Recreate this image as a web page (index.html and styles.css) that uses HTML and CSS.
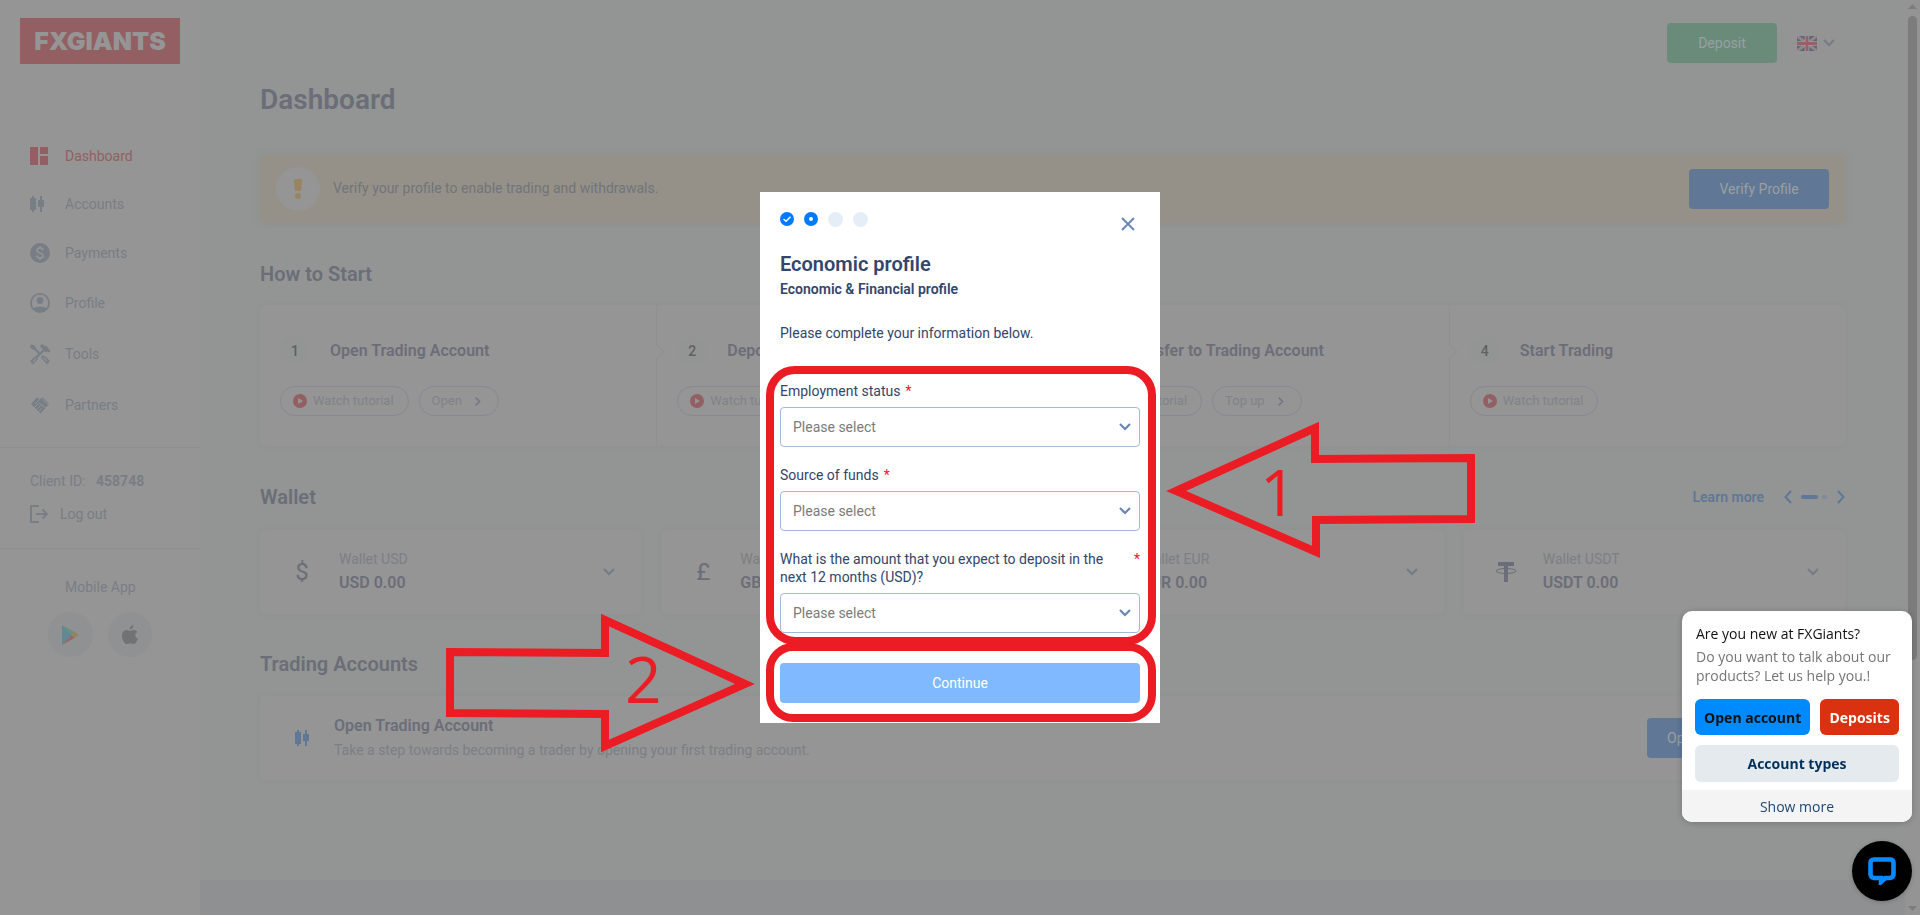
FILE: index.html
```html
<!DOCTYPE html>
<html lang="en">
<head>
<meta charset="utf-8">
<title>FXGiants - Dashboard</title>
<link rel="stylesheet" href="styles.css">
</head>
<body>
<svg class="defs" width="0" height="0" aria-hidden="true">
  <symbol id="chev-down" viewBox="0 0 14 10"><path d="M2 2l5 5 5-5" fill="none" stroke="currentColor" stroke-width="2.2"/></symbol>
  <symbol id="chev-right" viewBox="0 0 10 14"><path d="M2 2l5 5-5 5" fill="none" stroke="currentColor" stroke-width="2"/></symbol>
  <symbol id="candles" viewBox="0 0 18 18"><path d="M2 1h2v2h1.2v12H4v2H2v-2H0V3h2zM10 1h2v4h2v7h-2v5h-2v-5H8V5h2z" fill="currentColor"/><rect y="3" width="6" height="12" fill="currentColor"/></symbol>
  <symbol id="play" viewBox="0 0 14 14"><circle cx="7" cy="7" r="7" fill="#935f63"/><path d="M5 4l5 3-5 3z" fill="#959595"/></symbol>
</svg>

<div class="app">
  <aside class="sidebar">
    <div class="logo">FXGIANTS</div>
    <nav class="nav">
      <a class="nav-item active" href="#"><svg width="20" height="18" viewBox="0 0 20 18"><path d="M0 0h8v18H0zM10 0h8v7h-8zM10 9h8v9h-8z" fill="currentColor"/></svg>Dashboard</a>
      <a class="nav-item" href="#"><svg width="20" height="18" viewBox="0 0 20 18"><use href="#candles" width="18" height="18"/></svg>Accounts</a>
      <a class="nav-item" href="#"><svg width="20" height="20" viewBox="0 0 20 20"><circle cx="10" cy="10" r="10" fill="currentColor"/><path d="M13 7.300C12.700 5.800 11.600 5 10 5S7 5.900 7 7.400 8 9.400 10 10s3.200 1.200 3.200 2.700S11.800 15 10 15s-3-1-3.200-2.500M10 3v2.500M10 14.500V17" fill="none" stroke="#949494" stroke-width="1.700"/></svg>Payments</a>
      <a class="nav-item" href="#"><svg width="20" height="20" viewBox="0 0 20 20"><circle cx="10" cy="10" r="9.100" fill="none" stroke="currentColor" stroke-width="1.800"/><circle cx="10" cy="7.500" r="3.400" fill="currentColor"/><path d="M3.500 15.500C5.500 12.800 14.500 12.800 16.500 15.500C14 19.500 6 19.500 3.500 15.500z" fill="currentColor"/></svg>Profile</a>
      <a class="nav-item" href="#"><svg width="20" height="22" viewBox="0 0 20 22"><path d="M3 4l7 7M15 6L2 18.500M12 13l6 5.500" stroke="currentColor" stroke-width="2.200" fill="none"/><path d="M1 1.500l3 .5 2 3-2 2-3-1.500L0 3zM10 3l3-3v2l2 1 2 .5 3 4v2l-3-1-1 1-4-4zM0 18l5-4.500L8 16l-5 5.500zM11 14.500l3-2 6 5.500-3 3.500z" fill="currentColor"/><path d="M3 18.500l3-2.800M13.500 14.500l3.500 3.700" stroke="#949494" stroke-width="1.100"/></svg>Tools</a>
      <a class="nav-item" href="#"><svg width="20" height="20" viewBox="0 0 20 20"><path d="M1 9l6-6.500 3 1.500 3-1.500L19 9l-8.500 9.500z" fill="currentColor"/><path d="M10 4L5 9M12.500 4l6 6M4.500 12.500L9 8M6.500 14.500l4-4M8.500 16.500l4-4M9 8l7 5" stroke="#949494" stroke-width=".9" fill="none"/></svg>Partners</a>
    </nav>
    <div class="client">
      <div>Client ID: <strong>458748</strong></div>
      <a class="logout" href="#"><svg width="18" height="18" viewBox="0 0 18 18"><path d="M9 1H1v16h8M6 9h11M12.500 4.500L17 9l-4.500 4.500" fill="none" stroke="currentColor" stroke-width="1.900"/></svg>Log out</a>
    </div>
    <div class="mobile">
      <div>Mobile App</div>
      <div class="stores">
        <a class="store" href="#" aria-label="Google Play"><svg width="18" height="20" viewBox="0 0 18 20"><path d="M1 0v20l9.500-10z" fill="#618894"/><path d="M1 0l12.500 7-3 3z" fill="#62947a"/><path d="M13.500 7L18 10l-4.500 3-3-3z" fill="#998159"/><path d="M1 20l12.500-7-3-3z" fill="#976768"/></svg></a>
        <a class="store" href="#" aria-label="App Store"><svg width="16" height="20" viewBox="0 0 16 20"><path d="M11.500 0c.2 2-1.600 4.300-3.700 4.300C7.600 2.200 9.400.3 11.500 0zM8 6c1 0 2-1 3.800-1 1.400 0 2.700.7 3.500 1.900-3 1.700-2.500 5.600.6 6.900C15 16.300 13.500 19 11.800 19c-1.300 0-1.900-.8-3.500-.8S6 19 4.800 19C2.500 19 0 14.500 0 11c0-3.700 2.200-5.900 4.500-5.900C6 5.100 7.200 6 8 6z" fill="#717273"/></svg></a>
      </div>
    </div>
  </aside>

  <div class="page">
    <main class="main">
      <div class="topbar">
        <button class="btn green">Deposit</button>
        <button class="lang" aria-label="Language">
          <svg width="20" height="15" viewBox="0 0 20 15"><path d="M0 0h20v15H0z" fill="#5f6879"/><path d="M0 0l20 15M20 0L0 15" stroke="#9c9a9b" stroke-width="2.400"/><path d="M0 0l20 15M20 0L0 15" stroke="#976267" stroke-width=".8"/><path d="M10 0v15M0 7.500h20" stroke="#9c9a9b" stroke-width="4.600"/><path d="M10 0v15M0 7.500h20" stroke="#976267" stroke-width="2.800"/></svg>
          <svg width="14" height="10"><use href="#chev-down"/></svg>
        </button>
      </div>
      <h1>Dashboard</h1>
      <section class="alert">
        <span class="alert-icon"><svg width="8" height="20" viewBox="0 0 8 20"><path d="M0 1.500Q0 0 1.500 0h5Q8 0 8 1.500L7 11q-.2 1-1.200 1H2.200Q1.200 12 1 11z" fill="#998460"/><circle cx="4" cy="17" r="3" fill="#998460"/></svg></span>
        <p>Verify your profile to enable trading and withdrawals.</p>
        <button class="btn blue verify">Verify Profile</button>
      </section>

      <h2>How to Start</h2>
      <section class="steps">
        <div class="step"><div class="step-head"><span class="num">1</span><h3>Open Trading Account</h3></div>
          <div class="pills"><button class="pill"><svg width="14" height="14"><use href="#play"/></svg>Watch tutorial</button><button class="pill">Open<svg class="go" width="8" height="11"><use href="#chev-right"/></svg></button></div></div>
        <div class="step"><div class="step-head"><span class="num">2</span><h3>Deposit</h3></div>
          <div class="pills"><button class="pill"><svg width="14" height="14"><use href="#play"/></svg>Watch tutorial</button><button class="pill">Deposit<svg class="go" width="8" height="11"><use href="#chev-right"/></svg></button></div></div>
        <div class="step"><div class="step-head"><span class="num">3</span><h3>Transfer to Trading Account</h3></div>
          <div class="pills"><button class="pill"><svg width="14" height="14"><use href="#play"/></svg>Watch tutorial</button><button class="pill">Top up<svg class="go" width="8" height="11"><use href="#chev-right"/></svg></button></div></div>
        <div class="step"><div class="step-head"><span class="num">4</span><h3>Start Trading</h3></div>
          <div class="pills"><button class="pill"><svg width="14" height="14"><use href="#play"/></svg>Watch tutorial</button></div></div>
      </section>

      <div class="section-head">
        <h2>Wallet</h2>
        <a class="learn" href="#">Learn more</a>
        <div class="pager">
          <button aria-label="Previous"><svg width="8" height="14" viewBox="0 0 8 14"><path d="M7 1L1.500 7 7 13" fill="none" stroke="currentColor" stroke-width="2"/></svg></button>
          <span class="bar"></span><span class="dot"></span>
          <button aria-label="Next"><svg width="8" height="14" viewBox="0 0 8 14"><path d="M1 1l5.500 6L1 13" fill="none" stroke="currentColor" stroke-width="2"/></svg></button>
        </div>
      </div>
      <section class="wallets">
        <article class="wallet"><span class="coin">$</span><div><p>Wallet USD</p><strong>USD 0.00</strong></div><svg class="more" width="14" height="10"><use href="#chev-down"/></svg></article>
        <article class="wallet"><span class="coin">£</span><div><p>Wallet GBP</p><strong>GBP 0.00</strong></div><svg class="more" width="14" height="10"><use href="#chev-down"/></svg></article>
        <article class="wallet"><span class="coin">€</span><div><p>Wallet EUR</p><strong>EUR 0.00</strong></div><svg class="more" width="14" height="10"><use href="#chev-down"/></svg></article>
        <article class="wallet"><span class="coin"><svg width="22" height="20" viewBox="0 0 22 20"><path d="M3 0h16v4h-6v16H9V4H3z" fill="currentColor"/><ellipse cx="11" cy="9" rx="10" ry="2.500" fill="none" stroke="currentColor" stroke-width="1"/></svg></span><div><p>Wallet USDT</p><strong>USDT 0.00</strong></div><svg class="more" width="14" height="10"><use href="#chev-down"/></svg></article>
      </section>

      <h2>Trading Accounts</h2>
      <section class="trade">
        <span class="coin tint"><svg width="14" height="18" viewBox="0 0 14 18"><use href="#candles" width="18" height="18"/></svg></span>
        <div><h3>Open Trading Account</h3><p>Take a step towards becoming a trader by opening your first trading account.</p></div>
        <button class="btn blue">Open Trading Account</button>
      </section>
    </main>
    <footer class="footer"></footer>
  </div>

  <div class="scrollbar" aria-hidden="true">
    <svg width="9" height="5" viewBox="0 0 9 5"><path d="M0 5l4.500-5L9 5z" fill="#7d7d7d"/></svg>
    <span class="thumb"></span>
    <svg width="9" height="5" viewBox="0 0 9 5"><path d="M0 0l4.500 5L9 0z" fill="#7d7d7d"/></svg>
  </div>
</div>

<div class="overlay">
  <form class="modal" role="dialog" aria-labelledby="modal-title">
    <div class="modal-top">
      <div class="progress">
        <svg width="14" height="14" viewBox="0 0 14 14"><circle cx="7" cy="7" r="7" fill="#007aff"/><path d="M3.500 7l2.500 2.300 4.500-4.500" fill="none" stroke="#fff" stroke-width="1.400"/></svg>
        <svg width="14" height="14" viewBox="0 0 14 14"><circle cx="7" cy="7" r="7" fill="#007aff"/><circle cx="7" cy="7" r="2" fill="#fff"/></svg>
        <span class="todo"></span><span class="todo"></span>
      </div>
      <button class="close" type="button" aria-label="Close"><svg width="14" height="14" viewBox="0 0 14 14"><path d="M1 1l12 12M13 1L1 13" stroke="#6a87b0" stroke-width="2"/></svg></button>
    </div>
    <h2 id="modal-title">Economic profile</h2>
    <h3>Economic &amp; Financial profile</h3>
    <p class="intro">Please complete your information below.</p>
    <div class="field">
      <label for="employment"><span>Employment status</span><em>*</em></label>
      <div class="select"><select id="employment"><option>Please select</option></select><svg width="14" height="10"><use href="#chev-down"/></svg></div>
    </div>
    <div class="field">
      <label for="funds"><span>Source of funds</span><em>*</em></label>
      <div class="select"><select id="funds"><option>Please select</option></select><svg width="14" height="10"><use href="#chev-down"/></svg></div>
    </div>
    <div class="field">
      <label for="amount"><span>What is the amount that you expect to deposit in the next 12 months (USD)?</span><em>*</em></label>
      <div class="select"><select id="amount"><option>Please select</option></select><svg width="14" height="10"><use href="#chev-down"/></svg></div>
    </div>
    <button class="continue" type="submit">Continue</button>

    <svg class="marks" width="400" height="531" viewBox="0 0 400 531">
      <g fill="none" stroke="#ec1c24" stroke-width="8" stroke-miterlimit="10">
        <rect x="10" y="178" width="382" height="271" rx="25"/>
        <rect x="10" y="455" width="382" height="71" rx="23"/>
        <path d="M416 299L555 236V267L711 266V327L556 328V360z"/>
        <path d="M-15 492L-155 428V461L-310 460V521L-155 522V554z"/>
      </g>
      <text x="500" y="324">1</text>
      <text x="-135" y="511">2</text>
    </svg>
  </form>
</div>

<aside class="chat">
  <div class="chat-body">
    <p class="chat-title">Are you new at FXGiants?</p>
    <p class="chat-text">Do you want to talk about our products? Let us help you.!</p>
    <div class="chat-actions">
      <button class="c-blue">Open account</button>
      <button class="c-red">Deposits</button>
      <button class="c-grey">Account types</button>
    </div>
  </div>
  <button class="chat-more">Show more</button>
</aside>
<button class="launcher" aria-label="Chat"><svg width="28" height="28" viewBox="0 0 28 28"><path d="M6 2.500h16q3.500 0 3.500 3.500v11q0 3.500-3.500 4h-4.500l-4.500 4v-4H6q-3.500-.5-3.500-4V6Q2.500 2.500 6 2.500z" fill="none" stroke="#0a8aff" stroke-width="4.600"/></svg></button>
</body>
</html>
```
FILE: styles.css
```css
* { box-sizing: border-box; margin: 0; padding: 0; }
body { font-family: Roboto, sans-serif; font-size: 14px; line-height: 18px; color: #7b7f86; background: #929593; overflow: hidden; }
button { font: inherit; border: 0; cursor: pointer; }
a { color: inherit; text-decoration: none; }
svg { display: block; flex: none; }
.defs { position: absolute; }

.app { display: flex; min-height: 100vh; }
.sidebar { width: 200px; flex: none; background: #959595; color: #787e86; }
.logo { margin: 18px 20px 0; height: 46px; background: #935f63; color: #959595; font: 900 25px/46px Inter, sans-serif; text-align: center; }
.nav { display: flex; flex-direction: column; gap: 30px; padding: 83px 30px 32px; }
.nav-item { display: flex; align-items: center; gap: 15px; height: 20px; }
.nav-item:nth-child(-n+2) { height: 18px; }
.nav-item:nth-child(5) { height: 22px; }
.active { color: #935f63; }
.client { border: solid #8d9092; border-width: 1px 0; padding: 24px 30px 25px; display: flex; flex-direction: column; gap: 15px; }
.client strong { margin-left: 7px; font-weight: 700; }
.logout { display: flex; align-items: center; gap: 12px; }
.mobile { padding: 29px 48px; }
.mobile > div:first-child { padding-left: 17px; }
.stores { display: flex; gap: 15px; padding-top: 16px; }
.store { width: 45px; height: 45px; border-radius: 50%; background: #909192; display: grid; place-items: center; }

.page { flex: 1; min-width: 0; display: flex; flex-direction: column; }
.main { flex: 1; padding: 23px 60px 0; }
.footer { height: 35px; background: #8f9092; }
h1, h2, h3 { font-weight: 600; color: #6b6e78; }
h1 { font-size: 28px; line-height: 36px; margin: 19px 0 37px; }
.main h2 { font-size: 20px; line-height: 24px; }
h3 { font-size: 16px; line-height: 20px; }
.topbar { display: flex; justify-content: flex-end; gap: 10px; }
.btn { height: 40px; padding: 0 20px; border-radius: 4px; color: #9c9fa1; }
.green { background: #6a8b7a; width: 110px; }
.blue { background: #607896; }
.verify { width: 140px; }
.lang { width: 58px; height: 40px; border-radius: 4px; background: #949494; color: #757c87; display: flex; align-items: center; justify-content: center; gap: 5px; }
.alert { display: flex; align-items: center; height: 68px; padding: 0 16px; border-radius: 4px; background: #959188; box-shadow: 0 0 6px #8f8f8f; margin-bottom: 39px; color: #71747a; }
.alert p { flex: 1; padding: 0 0 2px 13px; }
.alert-icon { width: 44px; height: 44px; border-radius: 50%; background: #959595; display: grid; place-items: center; }
.steps, .wallet, .trade { background: #959595; border-radius: 4px; box-shadow: 0 0 4px #919090; }
.steps { display: grid; grid-template-columns: repeat(4, 1fr); margin: 19px 0 39px; }
.step { position: relative; padding: 31px 20px 30px; }
.step + .step { border-left: 1px solid #8f9092; }
.step + .step::before { content: ""; position: absolute; left: -6px; top: 41px; width: 10px; height: 10px; border: solid #8f9092; border-width: 1px 1px 0 0; background: #959595; transform: rotate(45deg); }
.step-head { display: flex; align-items: center; gap: 20px; }
.num { width: 30px; height: 30px; border-radius: 50%; background: #929593; color: #5f6163; font-weight: 500; display: grid; place-items: center; }
.pills { display: flex; gap: 10px; padding-top: 20px; }
.pill { display: flex; align-items: center; gap: 6px; height: 30px; padding: 0 14px 0 12px; border: 1px solid #888992; border-radius: 15px; background: none; color: #7f8388; font-size: 13px; }
.go { margin: 0 2px 0 6px; color: #717885; }
.section-head { display: flex; align-items: center; color: #5f7798; }
.section-head h2 { flex: 1; }
.learn { font-weight: 600; }
.pager { display: flex; align-items: center; gap: 4px; padding-left: 20px; }
.pager button { background: none; color: inherit; padding: 5px 0; }
.bar { width: 17px; height: 4px; border-radius: 2px; background: #5f7798; margin-left: 5px; }
.dot { width: 5px; height: 4px; border-radius: 2px; background: #7f8b9b; margin-right: 6px; }
.wallets { display: grid; grid-template-columns: repeat(4, 1fr); gap: 20px; margin: 21px 0 38px; }
.wallet { display: flex; align-items: center; gap: 15px; height: 84px; padding: 0 25px 0 20px; }
.wallet strong { display: block; font-size: 16px; line-height: 24px; font-weight: 600; color: #6b6e78; }
.wallet p { line-height: 20px; padding-bottom: 2px; }
.coin { width: 44px; height: 44px; border-radius: 50%; background: #949594; color: #6b6e78; display: grid; place-items: center; font-size: 24px; }
.more { margin-left: auto; color: #757c87; }
.trade { display: flex; align-items: center; height: 84px; padding: 0 20px; gap: 10px; margin-top: 20px; }
.trade div { flex: 1; }
.trade p { line-height: 20px; padding-top: 4px; }
.tint { color: #607896; }
.scrollbar { width: 15px; flex: none; height: 100vh; background: #949494; display: flex; flex-direction: column; align-items: center; padding: 4px 0; }
.thumb { width: 9px; height: 71%; margin: 7px 0 auto; border-radius: 5px; background: #7c7c7c; }

.overlay { position: fixed; inset: 0; display: grid; place-items: center; }
.modal { position: relative; width: 400px; padding: 20px; background: #fff; color: #33456a; }
.modal h2, .modal h3 { color: #33456a; }
.modal-top { display: flex; justify-content: space-between; height: 40px; }
.progress { display: flex; gap: 10px; }
.todo { width: 15px; height: 15px; border-radius: 50%; background: #e4edf8; }
.close { background: none; align-self: flex-start; padding: 5px; }
.modal h2 { font-size: 20px; line-height: 24px; }
.modal h3 { font-size: 14px; line-height: 18px; margin-top: 4px; }
.intro { padding: 26px 0 40px; }
.field { margin-bottom: 19px; }
.field label { display: flex; padding-bottom: 7px; }
.field label em { color: #f0142d; font-style: normal; padding-left: 5px; }
.select { position: relative; }
.select select { appearance: none; width: 100%; height: 40px; border: 1px solid #a3b8d8; border-radius: 4px; background: #fff; font: inherit; color: #7b7b7b; padding: 0 12px; }
.select svg { position: absolute; right: 8px; top: 15px; color: #6a87b0; pointer-events: none; }
.continue { width: 100%; height: 40px; border-radius: 4px; background: #80b9ff; color: #fff; margin-top: 30px; display: block; }
.marks { position: absolute; left: 0; top: 0; overflow: visible; pointer-events: none; }
.marks text { font: 400 64px "Open Sans", sans-serif; fill: #ec1c24; }

.chat { position: fixed; right: 8px; bottom: 93px; width: 230px; border-radius: 10px; background: #fff; overflow: hidden; box-shadow: 0 1px 6px rgba(0, 0, 0, .2); font: 14px/19px "Open Sans", sans-serif; }
.chat-body { padding: 13px 13px 8px; }
.chat-title { color: #111; padding-left: 1px; }
.chat-text { color: #757575; padding: 4px 0 14px 1px; }
.chat-actions { display: flex; flex-wrap: wrap; gap: 10px; }
.chat-actions button { flex: 1 0 auto; height: 36px; border-radius: 6px; font-weight: 700; }
.c-blue { background: #008aff; color: #111; }
.c-red { background: #da3110; color: #fff; }
.chat-actions .c-grey { height: 37px; background: #e4eaed; color: #00305c; }
.chat-more { width: 100%; height: 32px; background: #f4f4f4; color: #1c4672; }
.launcher { position: fixed; right: 8px; bottom: 14px; width: 60px; height: 60px; border-radius: 50%; background: #000; display: grid; place-items: center; box-shadow: 0 1px 4px rgba(0, 0, 0, .2); }
```
